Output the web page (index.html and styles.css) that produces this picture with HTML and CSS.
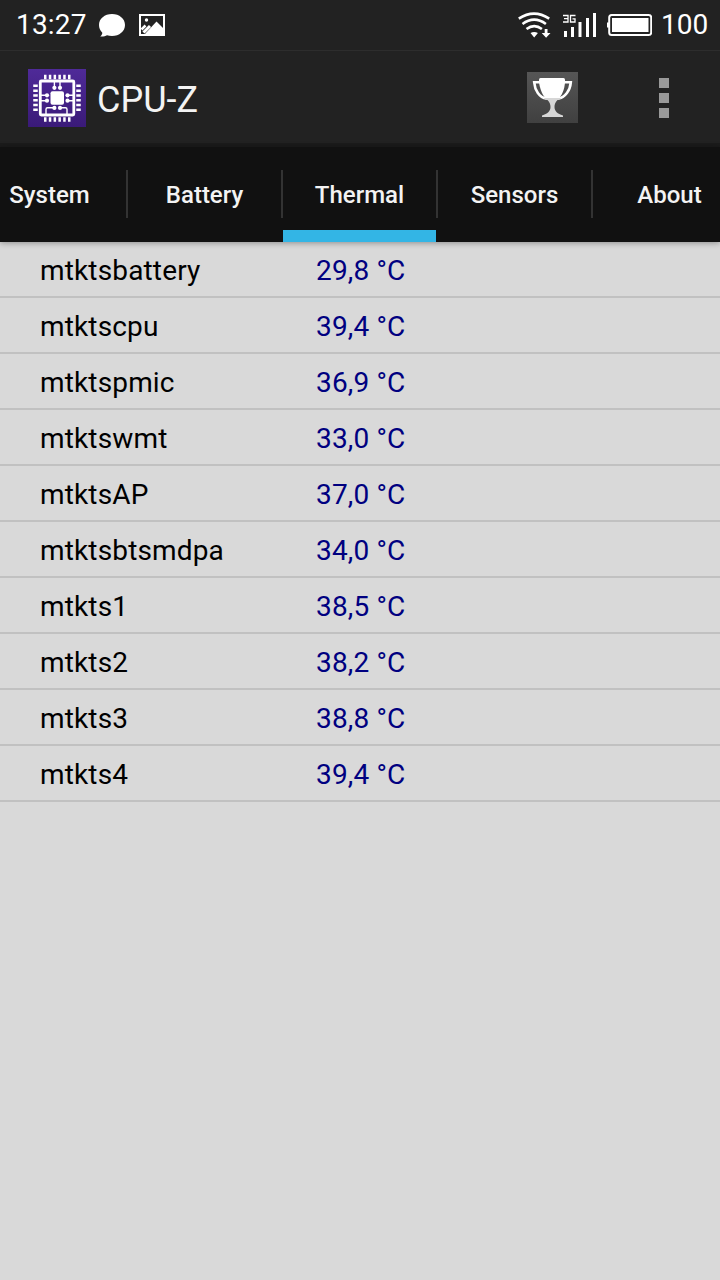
FILE: index.html
```
<!DOCTYPE html>
<html lang="en">
<head>
    <meta charset="UTF-8">
    <meta name="viewport" content="width=device-width, initial-scale=1.0">
    <title>CPU-Z</title>
    <link rel="stylesheet" href="styles.css">
</head>
<body>
    <!-- Status bar -->
    <div class="status-bar">
        <span class="clock">13:27</span>
        <svg class="icon-chat" width="28" height="26" viewBox="98 12 28 26">
            <path d="M112 14c7.400 0 13 4.700 13 11s-5.600 11-13 11c-1.800 0-3.500-.3-5-.8-1.600 1-3.800 1.500-6.800 1.300 1.300-1 2-2.200 2.100-3.800C100.200 30.800 99 28 99 25c0-6.300 5.600-11 13-11z" fill="#fff"/>
        </svg>
        <svg class="icon-image" width="26" height="22" viewBox="0 0 26 22">
            <rect x="1" y="1" width="24" height="20" fill="none" stroke="#fff" stroke-width="2"/>
            <circle cx="7.500" cy="6" r="1.700" fill="#fff"/>
            <path d="M2.500 15.500l4-4" stroke="#fff" stroke-width="2.500"/>
            <path d="M4.500 18.500l6.500-6.500" stroke="#fff" stroke-width="3"/>
            <path d="M5 21l12.500-13.500L25 15v6z" fill="#fff"/>
        </svg>
        <span class="spacer"></span>
        <svg class="icon-wifi" width="34" height="28" viewBox="517 11 34 28">
            <g fill="none" stroke="#fff" stroke-width="2.600">
                <path d="M518.800 18.600q15.200-10 30.400 0"/>
                <path d="M522.500 24q11.700-8.600 23.400 0"/>
                <path d="M526.500 29q7.700-5.800 15.400 0"/>
            </g>
            <path d="M530.500 33q3.700-2 7.400 0l-3.700 4.500zM544.700 29h2.800v4h3l-4.400 4.800-4.400-4.800h3z" fill="#fff"/>
        </svg>
        <svg class="icon-signal" width="35" height="26" viewBox="562 12 35 26">
            <path d="M564 31h3v6h-3zM571 27h3v10h-3zM578.500 22h3v15h-3zM586 18h3v19h-3zM593 13h3v24h-3z" fill="#fff"/>
            <path d="M563 15.500h5v6.500h-5M564 18.600h4M575.500 15.500h-5v6.500h4.500v-3.200h-2.500" fill="none" stroke="#fff" stroke-width="1.300"/>
        </svg>
        <svg class="icon-battery" width="45" height="22" viewBox="606 14 45 22">
            <rect x="608.200" y="15" width="42" height="20" rx="2.500" fill="none" stroke="#fff" stroke-width="2"/>
            <rect x="611" y="18" width="36.500" height="14" fill="#fff"/>
            <rect x="606" y="22.500" width="2" height="5" fill="#fff"/>
        </svg>
        <span class="battery-level">100</span>
    </div>

    <!-- Action bar -->
    <div class="action-bar">
        <svg class="app-icon" width="58" height="58" viewBox="0 0 58 58">
            <defs>
                <linearGradient id="purple" x1="0" y1="0" x2="0" y2="1">
                    <stop offset="0" stop-color="#4f2a98"/>
                    <stop offset="1" stop-color="#3a1a78"/>
                </linearGradient>
            </defs>
            <rect width="58" height="58" fill="url(#purple)"/>
            <g stroke="#fff" fill="none">
                <path d="M16 8h27M16 50.500h27" stroke-width="4.500" stroke-dasharray="2.500 2.300"/>
                <path d="M7.500 15.600v28M50.500 15.600v28" stroke-width="4.500" stroke-dasharray="2.500 2.300"/>
                <rect x="12.300" y="12" width="33.500" height="34" rx="1" stroke-width="2.800"/>
                <path d="M26.400 12v6M32 12v6M12 26.300h7M12 31.700h7M39 26.300h7M39 31.700h7M27 38.700h-7.500q-1.500 0-1.500 1.500v5M32 38.700h5.500q1.500 0 1.500 1.500v5" stroke-width="1.400"/>
            </g>
            <g fill="#fff">
                <rect x="22.500" y="22.300" width="13.500" height="13.500" rx="2"/>
                <circle cx="26.400" cy="18.800" r="2.100"/>
                <circle cx="32" cy="18.800" r="2.100"/>
                <circle cx="19" cy="26.300" r="2.100"/>
                <circle cx="19" cy="31.700" r="2.100"/>
                <circle cx="39.500" cy="26.300" r="2.100"/>
                <circle cx="39.500" cy="31.700" r="2.100"/>
                <circle cx="26.400" cy="38.900" r="2.100"/>
                <circle cx="32" cy="38.900" r="2.100"/>
            </g>
        </svg>
        <h1 class="title">CPU-Z</h1>
        <span class="spacer"></span>
        <svg class="trophy" width="51" height="51" viewBox="0 0 51 51">
            <defs>
                <linearGradient id="grey" x1="0" y1="0" x2="0" y2="1">
                    <stop offset="0" stop-color="#565656"/>
                    <stop offset="1" stop-color="#404040"/>
                </linearGradient>
            </defs>
            <rect width="51" height="51" fill="url(#grey)"/>
            <path d="M13.500 10.300H7.200c.6 7.700 5 15.200 12.300 16.200M37 10.300h6.800c-.6 7.700-5.500 15.200-12.800 16.200" fill="none" stroke="#fff" stroke-width="2.600"/>
            <path d="M12 7.500q0-1.500 1.500-1.500h23q1.500 0 1.500 1.500v3C37.500 16 36 22 32 26H18.500C14.500 22 13 16 12 10.500z" fill="#fff"/>
            <path d="M17 26h17c-.5 1.500-2 2-3.500 2-2.300 2.500-3 4.500-3 7 0 4 3 7 8.500 8.500V45H15v-1.500c5.500-1.500 8.500-4.500 8.500-8.500 0-2.500-.7-4.500-3-7-1.500 0-3-.5-3.500-2z" fill="#d6d6d6"/>
        </svg>
        <div class="menu">
            <span></span>
            <span></span>
            <span></span>
        </div>
    </div>

    <!-- Tabs -->
    <div class="tabs">
        <div class="tab">System</div>
        <div class="tab">Battery</div>
        <div class="tab active">Thermal</div>
        <div class="tab">Sensors</div>
        <div class="tab">About</div>
    </div>

    <!-- Temperatures -->
    <div class="list">
        <div class="row"><span class="name">mtktsbattery</span><span class="value">29,8 °C</span></div>
        <div class="row"><span class="name">mtktscpu</span><span class="value">39,4 °C</span></div>
        <div class="row"><span class="name">mtktspmic</span><span class="value">36,9 °C</span></div>
        <div class="row"><span class="name">mtktswmt</span><span class="value">33,0 °C</span></div>
        <div class="row"><span class="name">mtktsAP</span><span class="value">37,0 °C</span></div>
        <div class="row"><span class="name">mtktsbtsmdpa</span><span class="value">34,0 °C</span></div>
        <div class="row"><span class="name">mtkts1</span><span class="value">38,5 °C</span></div>
        <div class="row"><span class="name">mtkts2</span><span class="value">38,2 °C</span></div>
        <div class="row"><span class="name">mtkts3</span><span class="value">38,8 °C</span></div>
        <div class="row"><span class="name">mtkts4</span><span class="value">39,4 °C</span></div>
    </div>
</body>
</html>
```

FILE: styles.css
```
* {
    box-sizing: border-box;
}
body {
    display: flex;
    flex-direction: column;
    margin: 0;
    height: 100vh;
    overflow: hidden;
    font-family: Roboto, sans-serif;
    background: #d9d9d9;
    color: #000;
}
svg {
    display: block;
    flex: none;
}
.spacer {
    flex: 1;
}
.status-bar {
    display: flex;
    align-items: center;
    flex: none;
    height: 51px;
    padding: 0 12px 1px 16px;
    border-bottom: 1px solid #2d2d2d;
    background: #222;
    color: #fff;
    font-size: 28px;
}
.clock {
    width: 82px;
    letter-spacing: 0.2px;
}
.icon-image {
    margin-left: 13px;
}
.icon-signal {
    margin-left: 11px;
}
.icon-battery {
    margin-left: 10px;
}
.battery-level {
    width: 47px;
    margin-left: 9px;
}
.action-bar {
    display: flex;
    align-items: center;
    flex: none;
    height: 96px;
    padding: 1px 51px 0 28px;
    border-bottom: 4px solid #1b1b1b;
    background: #222;
}
.title {
    margin: 0 0 0 11px;
    padding-top: 4px;
    color: #f3f3f3;
    font-size: 36px;
    font-weight: 400;
}
.menu {
    display: flex;
    flex-direction: column;
    gap: 5px;
    margin-left: 81px;
}
.menu span {
    width: 10px;
    height: 10px;
    background: #999;
}
.tabs {
    display: flex;
    justify-content: center;
    flex: none;
    height: 95px;
    padding-left: 1px;
    background: #111;
    box-shadow: 0 1px 6px rgba(0, 0, 0, 0.35);
}
.tab {
    position: relative;
    flex: none;
    width: 155px;
    padding-right: 2px;
    color: #f3f3f3;
    font-size: 24px;
    font-weight: 500;
    line-height: 97px;
    text-align: center;
}
.tab:not(:last-child)::after {
    content: "";
    position: absolute;
    top: 23px;
    right: 0;
    width: 2px;
    height: 48px;
    background: #333;
}
.tab.active::before {
    content: "";
    position: absolute;
    left: 0;
    right: 2px;
    bottom: 0;
    height: 12px;
    background: #33b5e5;
}
.row {
    display: flex;
    height: 56px;
    padding-left: 40px;
    border-bottom: 2px solid #c1c1c1;
    font-size: 28px;
    line-height: 58px;
    letter-spacing: 0.15px;
}
.name {
    width: 276px;
}
.value {
    color: #000080;
}
```
